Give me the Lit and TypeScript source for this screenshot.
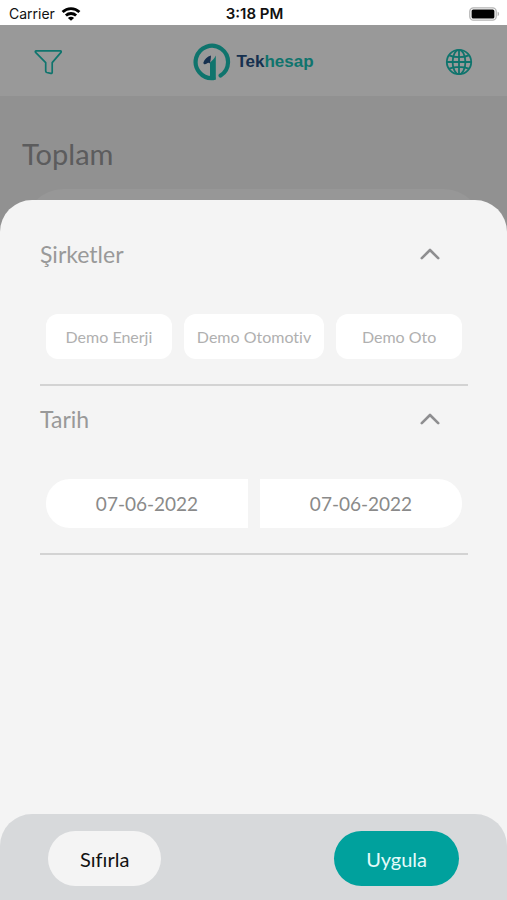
import { LitElement, html, svg, css } from "lit";
import { customElement, state } from "lit/decorators.js";

const companies = ["Demo Enerji", "Demo Otomotiv", "Demo Oto"];

const wifiIcon = svg`<svg width="20" height="14" viewBox="0 0 20 14" fill="none" stroke="#000" stroke-width="2.8" aria-hidden="true">
  <path d="M1.6 5C6.3.4 13.7.4 18.4 5" />
  <path d="M4.9 8.6c2.9-2.8 7.3-2.8 10.2 0" />
  <path d="M10 13.8 6.9 10.9c1.6-1.5 4.6-1.5 6.2 0z" fill="#000" stroke="none" />
</svg>`;

const batteryIcon = svg`<svg width="31" height="14" viewBox="0 0 31 14" aria-hidden="true">
  <rect x=".8" y=".8" width="26.4" height="12.4" rx="3.6" fill="#fff" stroke="#b4b4b4" stroke-width="1.3" />
  <rect x="2.6" y="2.4" width="22.8" height="9.2" rx="1.6" />
  <path d="M28.6 4.8c2 .6 2 3.8 0 4.4z" fill="#b4b4b4" />
</svg>`;

const funnelIcon = svg`<svg width="28" height="26" viewBox="0 0 28 26" fill="none" stroke="currentColor" stroke-width="1.7" stroke-linejoin="round" aria-hidden="true">
  <path d="M2.2 1.8h24.2c.9 0 1.1.9.6 1.6L18.2 13.6v9.6c0 1-.6 1.4-1.4 1.2l-4-.9c-.8-.2-1.1-.6-1.1-1.4v-8.5L1.6 3.4c-.5-.7-.3-1.6.6-1.6z" />
</svg>`;

const globeIcon = svg`<svg width="28" height="28" viewBox="0 0 28 28" fill="none" stroke="currentColor" stroke-width="1.8" aria-hidden="true">
  <circle cx="14" cy="14" r="12.2" />
  <ellipse cx="14" cy="14" rx="6.4" ry="12.2" />
  <path d="M14 1.8v24.4M1.8 14h24.4M4.2 7.3c5.6 2.4 14 2.4 19.6 0M4.2 20.7c5.6-2.4 14-2.4 19.6 0" />
</svg>`;

const logoIcon = svg`<svg width="38" height="38" viewBox="0 0 38 38" fill="none" aria-hidden="true">
  <path d="M20.4 35.1A16.2 16.2 0 1 1 27.6 32.6" stroke="#1ac2b6" stroke-width="4.2" stroke-linecap="round" />
  <path d="M17 19.4c2.4-1.4 4.2-3.6 5.8-6.8v24.2L17 37z" fill="#1ac2b6" />
  <path d="M10.4 19.6c1-3.6 3.8-6.2 7.6-7.2-.2 3-.4 5.4-1.2 8-.8-1-2-1-3 .2-1.4 1.4-3.8.8-3.4-1z" fill="#265084" />
</svg>`;

const chevronIcon = svg`<svg width="20" height="12" viewBox="0 0 20 12" fill="none" stroke="currentColor" stroke-width="2.6" stroke-linecap="round" stroke-linejoin="round" aria-hidden="true">
  <path d="M1.8 10.2 10 2l8.2 8.2" />
</svg>`;

@customElement("app-root")
export class AppRoot extends LitElement {
  @state() private companiesOpen = true;
  @state() private dateOpen = true;

  static styles = css`
    :host {
      display: flex;
      flex-direction: column;
      min-height: 100vh;
      font-family: Lato, "Open Sans", sans-serif;
      font-variant-ligatures: none;
      background: #fff;
    }
    * {
      box-sizing: border-box;
    }
    button,
    input {
      font: inherit;
      font-variant-ligatures: none;
      color: inherit;
      border: 0;
      margin: 0;
      padding: 0;
      background: none;
    }
    button {
      cursor: pointer;
    }
    svg {
      display: block;
    }
    .status {
      display: grid;
      grid-template-columns: 1fr auto 1fr;
      align-items: center;
      height: 25px;
      padding: 2px 7px 0 9px;
      font: 14px/20px Inter, sans-serif;
      color: #111;
    }
    .carrier {
      display: flex;
      align-items: center;
      gap: 6px;
    }
    .clock {
      font-size: 15px;
      font-weight: 600;
    }
    .battery {
      justify-self: end;
    }
    .stack {
      flex: 1;
      display: grid;
      grid-template: minmax(0, 1fr) / minmax(0, 1fr);
    }
    .page,
    .overlay {
      grid-area: 1 / 1;
    }
    .page {
      background: #f2f2f2;
    }
    .bar {
      display: grid;
      grid-template-columns: 1fr auto 1fr;
      align-items: center;
      height: 72px;
      padding: 2px 34px 0;
      background: #fff;
      border-bottom: 1px solid #f2f2f2;
      color: #1ac2b6;
    }
    .globe {
      justify-self: end;
    }
    .filter {
      justify-self: start;
    }
    .brand {
      display: flex;
      align-items: center;
      gap: 5px;
      font: bold 17px/24px "Liberation Sans", sans-serif;
    }
    .brand b {
      color: #265084;
    }
    h1 {
      margin: 40px 22px 18px;
      font-size: 29px;
      line-height: 34px;
      font-weight: 400;
      color: #99999c;
    }
    .card {
      height: 120px;
      margin: 0 24px;
      border-radius: 40px;
      background: #fcfcfc;
    }
    .overlay {
      display: flex;
      padding-top: 175px;
      background: rgb(0 0 0 / 40%);
    }
    .sheet {
      flex: 1;
      min-width: 0;
      display: flex;
      flex-direction: column;
      padding-top: 21px;
      background: #f4f4f4;
      border-radius: 32px 32px 0 0;
    }
    .section {
      margin: 0 39px 0 40px;
      padding-bottom: 25px;
      border-bottom: 2px solid #d3d3d3;
    }
    h2 {
      margin: 0;
      font-size: 23px;
      line-height: 28px;
      font-weight: 400;
      color: #999;
    }
    .toggle {
      display: flex;
      align-items: center;
      justify-content: space-between;
      width: 100%;
      height: 66px;
      padding-right: 28px;
    }
    .toggle svg {
      color: #8e8e90;
    }
    .shut svg {
      rotate: 180deg;
    }
    .choices {
      display: flex;
      gap: 12px;
      margin: 27px 6px 0;
    }
    .chip {
      flex: 1 1 0;
      height: 45px;
      padding: 0 13px;
      border-radius: 12px;
      background: #fff;
      color: #b0b0b0;
      font-size: 16px;
      line-height: 24px;
      white-space: nowrap;
    }
    .date {
      flex: 1 1 0;
      min-width: 0;
      height: 49px;
      background: #fff;
      color: #8a8a8a;
      font-size: 19px;
      text-align: center;
    }
    .from {
      border-radius: 24px 0 0 24px;
    }
    .to {
      border-radius: 0 24px 24px 0;
    }
    .actions {
      display: flex;
      justify-content: space-between;
      margin-top: auto;
      padding: 17px 48px 14px;
      background: #d7d9db;
      border-radius: 32px 32px 0 0;
    }
    .action {
      height: 55px;
      padding: 0 32px;
      border-radius: 28px;
      background: #f4f4f4;
      color: #111;
      font-size: 20px;
    }
    .primary {
      background: #00a19d;
      color: #e4fbfa;
    }
  `;

  render() {
    return html`
      <div class="status">
        <span class="carrier">Carrier ${wifiIcon}</span>
        <span class="clock">3:18 PM</span>
        <span class="battery">${batteryIcon}</span>
      </div>
      <div class="stack">
        <div class="page">
          <header class="bar">
            <button class="filter" aria-label="Filtre">${funnelIcon}</button>
            <div class="brand">${logoIcon}<span><b>Tek</b>hesap</span></div>
            <button class="globe" aria-label="Dil">${globeIcon}</button>
          </header>
          <h1>Toplam</h1>
          <div class="card"></div>
        </div>
        <div class="overlay">
          <div class="sheet" role="dialog" aria-label="Filtre">
            <section class="section">
              <h2>
                <button class="toggle ${this.companiesOpen ? "" : "shut"}" aria-expanded=${this.companiesOpen}
                  @click=${() => (this.companiesOpen = !this.companiesOpen)}>
                  Şirketler ${chevronIcon}
                </button>
              </h2>
              ${this.companiesOpen
                ? html`<div class="choices">
                    ${companies.map((name) => html`<button class="chip">${name}</button>`)}
                  </div>`
                : ""}
            </section>
            <section class="section">
              <h2>
                <button class="toggle ${this.dateOpen ? "" : "shut"}" aria-expanded=${this.dateOpen}
                  @click=${() => (this.dateOpen = !this.dateOpen)}>
                  Tarih ${chevronIcon}
                </button>
              </h2>
              ${this.dateOpen
                ? html`<div class="choices">
                    <input class="date from" type="text" aria-label="Başlangıç tarihi" value="07-06-2022" />
                    <input class="date to" type="text" aria-label="Bitiş tarihi" value="07-06-2022" />
                  </div>`
                : ""}
            </section>
            <footer class="actions">
              <button class="action">Sıfırla</button>
              <button class="action primary">Uygula</button>
            </footer>
          </div>
        </div>
      </div>
    `;
  }
}
